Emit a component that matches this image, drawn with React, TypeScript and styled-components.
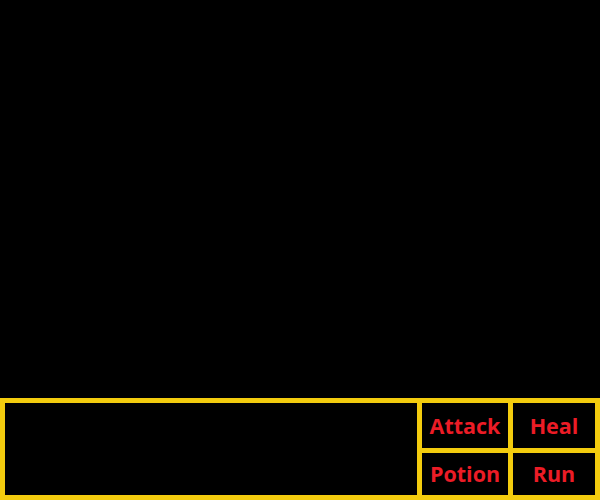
import React from "react";
import styled, { createGlobalStyle } from "styled-components";

const Global = createGlobalStyle`
  html, body {
    margin: 0;
    padding: 0;
    background: #000;
  }
  body {
    font-family: "Open Sans", "Liberation Sans", sans-serif;
  }
`;

const YELLOW = "#f3cc0e";
const RED = "#ec1c26";

const Screen = styled.div`
  width: 600px;
  height: 500px;
  display: flex;
  flex-direction: column;
  justify-content: flex-end;
  background: #000;
`;

const Dialog = styled.div`
  height: 102px;
  box-sizing: border-box;
  display: flex;
  border: 5px solid ${YELLOW};
`;

const Message = styled.div`
  flex: 1;
  background: #000;
`;

const Menu = styled.div`
  display: grid;
  grid-template-columns: 86px 82px;
  grid-template-rows: 45px 42px;
  gap: 5px;
  background: ${YELLOW};
  border-left: 5px solid ${YELLOW};
`;

const Option = styled.button`
  all: unset;
  display: flex;
  align-items: center;
  justify-content: center;
  background: #000;
  color: ${RED};
  font-family: "Open Sans", "Liberation Sans", sans-serif;
  font-weight: 700;
  font-size: 21.5px;
  line-height: 1;
  cursor: pointer;
`;

export default function App() {
  return (
    <>
      <Global />
      <Screen>
        <Dialog>
          <Message />
          <Menu>
            <Option>Attack</Option>
            <Option>Heal</Option>
            <Option>Potion</Option>
            <Option>Run</Option>
          </Menu>
        </Dialog>
      </Screen>
    </>
  );
}
